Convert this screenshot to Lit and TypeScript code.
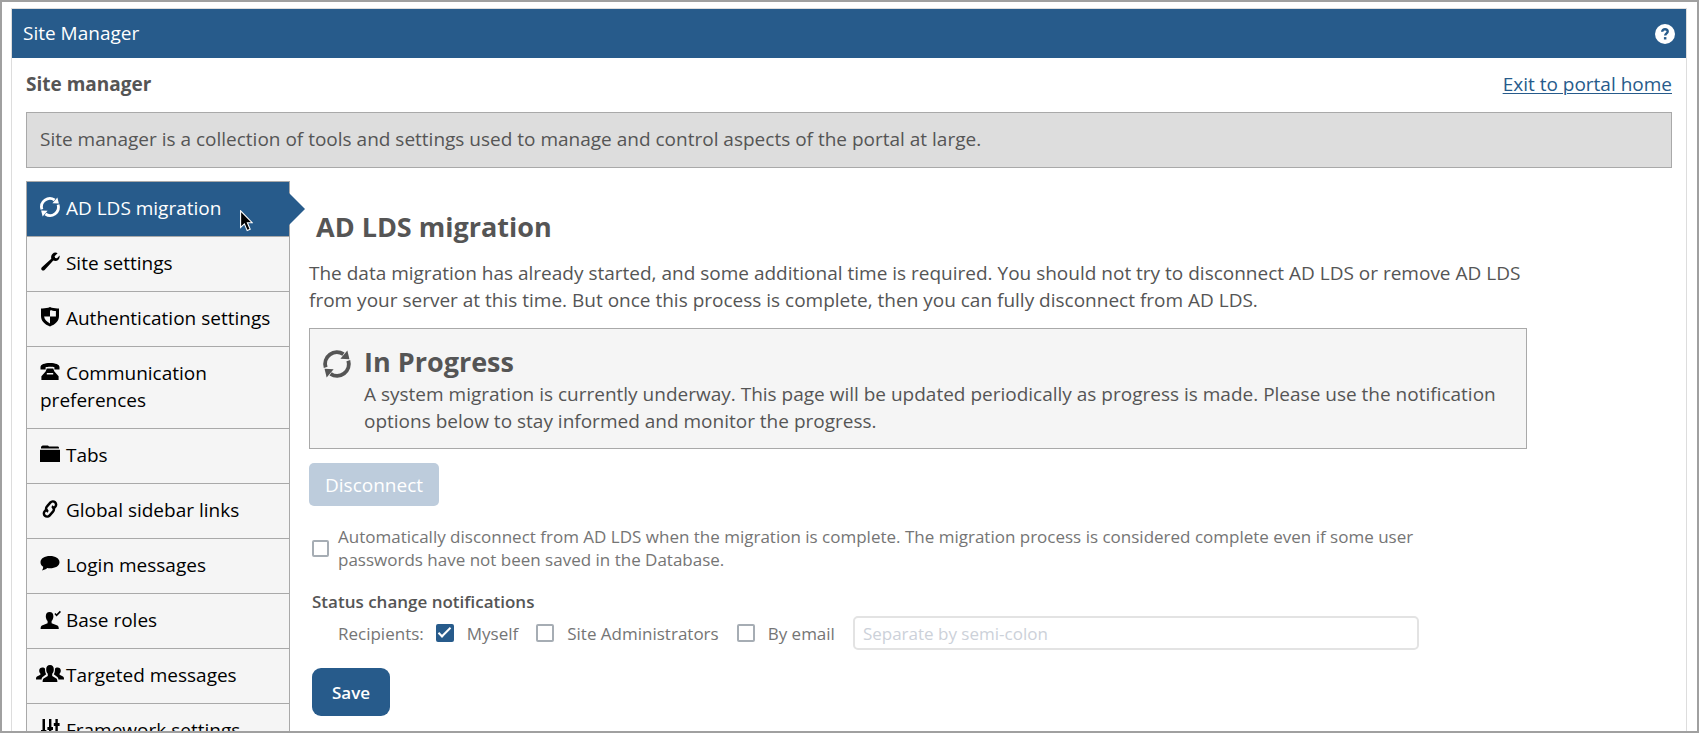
import { LitElement, html, css, svg, SVGTemplateResult } from "lit";
import { customElement, property, state } from "lit/decorators.js";
import { classMap } from "lit/directives/class-map.js";

type IconName =
  | "refresh" | "wrench" | "shield" | "phone" | "folder" | "link"
  | "comment" | "role" | "group" | "sliders" | "help";

// Every glyph is drawn on a 20 x 20 grid; "group" spills over its sides.
const ICONS: Record<IconName, SVGTemplateResult> = {
  refresh: svg`
    <path d="M1.9 12.4A8.4 8.4 0 0 1 14.6 3" fill="none" stroke="currentColor" stroke-width="2.8"/>
    <path d="M18.1 7.6A8.4 8.4 0 0 1 5.4 17" fill="none" stroke="currentColor" stroke-width="2.8"/>
    <path d="M17.4 0.4L18.9 6.6L12.4 6.2Z"/>
    <path d="M2.6 19.6L1.1 13.4L7.6 13.8Z"/>`,
  wrench: svg`
    <path d="M17.6 1.2L14.6 4.2L15.2 5.9L17 6.3L19.6 3.6C20.1 6.6 18 9 15.3 9C14.6 9 13.9 8.8 13.3 8.6L4.6 17.9C3.8 18.8 2.6 18.8 1.8 18.1C1 17.3 1 16.1 1.9 15.3L11.3 6.8C10.6 4.2 11.9 0.9 15.4 0.6C16.2 0.6 17 0.8 17.6 1.2Z"/>`,
  shield: svg`
    <path fill-rule="evenodd" d="M10 0C12.6 1.2 15.8 1.6 19 1.4V9C19 14 15.4 17.4 10 19.4C4.6 17.4 1 14 1 9V1.4C4.2 1.6 7.4 1.2 10 0ZM10 3.2V9.6H4.1C4.5 12.9 6.8 15 10 16.4V9.6H15.9V4C13.6 4 11.8 3.8 10 3.2Z"/>`,
  phone: svg`
    <path d="M0.5 7.4V5C0.5 2.6 4.4 1 10 1S19.5 2.6 19.5 5V7.4H14.4V5.2C12.4 4.5 7.6 4.5 5.6 5.2V7.4Z"/>
    <path fill-rule="evenodd" d="M6.8 6.4H13.2L14.4 9.4L18.6 14.2V18H1.4V14.2L5.6 9.4ZM6.8 11V12.6H13.2V11Z"/>`,
  folder: svg`
    <path d="M1 4.6V2.8L2.6 1.6H8L9 2.6H18.2L19 3.6V4.6Z"/>
    <path d="M0 5.8H20V18H0Z"/>`,
  link: svg`
    <g fill="none" stroke="currentColor" stroke-width="2.5" transform="rotate(-48 10 10)">
      <path d="M12 12.4H15.2A3.2 3.2 0 0 0 18.4 9.2A3.2 3.2 0 0 0 15.2 6H10A3.2 3.2 0 0 0 6.9 10.4"/>
      <path d="M8 7.6H4.8A3.2 3.2 0 0 0 1.6 10.8A3.2 3.2 0 0 0 4.8 14H10A3.2 3.2 0 0 0 13.1 9.6"/>
    </g>`,
  comment: svg`
    <path d="M10 2C15.4 2 19.5 4.4 19.5 8.2S15.4 14.2 10 14.2C9 14.2 8.1 14.1 7.2 14C5.8 15.3 4.1 16.2 2 16.4C2.8 15.3 3.2 14.2 3.2 12.8C1.6 11.7 0.5 10.2 0.5 8.2C0.5 4.4 4.6 2 10 2Z"/>`,
  role: svg`
    <path d="M9.6 3C12 3 13.4 4.6 13.4 7.2C13.4 9.4 12.6 11 11.6 12V14.2L17.4 16.6C18.4 17.2 18.8 18.4 18.8 20H0.6C0.6 18.4 1 17.2 2 16.6L7.6 14.2V12C6.6 11 5.8 9.4 5.8 7.2C5.8 4.6 7.2 3 9.6 3Z"/>
    <path d="M15 4.4L16.6 6.4L20.4 2.4" fill="none" stroke="currentColor" stroke-width="1.6"/>`,
  group: svg`
    <path d="M10 1C12.6 1 13.8 2.8 13.8 5.2C13.8 7.4 13.2 8.8 12.2 9.8V12L16.4 14.4C17.2 15 17.4 16.4 17.4 18H2.6C2.6 16.4 2.8 15 3.6 14.4L7.8 12V9.8C6.8 8.8 6.2 7.4 6.2 5.2C6.2 2.8 7.4 1 10 1Z"/>
    <path d="M2.4 3.4C3.6 3.4 4.6 3.8 5 4.6C5 7.6 5.4 9 6.2 10.2L3 12.8C2 13.4 1.6 14.4 1.6 15.4H-4C-4 13.8 -3.8 13 -3 12.6L0.4 10.8V9.4C-0.4 8.6 -0.8 7.8 -0.8 6.4C-0.8 4.6 0.6 3.4 2.4 3.4Z"/>
    <path d="M17.6 3.4C16.4 3.4 15.4 3.8 15 4.6C15 7.6 14.6 9 13.8 10.2L17 12.8C18 13.4 18.4 14.4 18.4 15.4H24C24 13.8 23.8 13 23 12.6L19.6 10.8V9.4C20.4 8.6 20.8 7.8 20.8 6.4C20.8 4.6 19.4 3.4 17.6 3.4Z"/>`,
  sliders: svg`
    <path d="M2.5 0H5V20H2.5ZM9 0H11.4V20H9ZM15.4 0H17.8V20H15.4Z"/>
    <path d="M1 11H6.4V14H1ZM7.4 8H13V11H7.4ZM13.8 4H19.6V7H13.8Z"/>`,
  help: svg`
    <circle cx="10" cy="10" r="10"/>
    <path d="M7.2 7.8C7.2 6 8.4 5.2 10 5.2S12.7 6.1 12.7 7.5C12.7 9.4 10.2 9.3 10.2 11.6" fill="none" stroke="#275b8b" stroke-width="2.4"/>
    <path d="M8.9 13.1H11.4V15.5H8.9Z" fill="#275b8b"/>`,
};

@customElement("ui-icon")
class UiIcon extends LitElement {
  @property() name: IconName = "refresh";

  static styles = css`
    :host { display: inline-block; width: 20px; height: 20px; flex: none; }
    .glyph { display: block; width: 100%; height: 100%; overflow: visible; fill: currentColor; }
  `;

  render() {
    return html`<svg class="glyph" viewBox="0 0 20 20" aria-hidden="true">${ICONS[this.name]}</svg>`;
  }
}

@customElement("site-menu")
class SiteMenu extends LitElement {
  @state() active = 0;

  items: { icon: IconName; label: string }[] = [
    { icon: "refresh", label: "AD LDS migration" },
    { icon: "wrench", label: "Site settings" },
    { icon: "shield", label: "Authentication settings" },
    { icon: "phone", label: "Communication preferences" },
    { icon: "folder", label: "Tabs" },
    { icon: "link", label: "Global sidebar links" },
    { icon: "comment", label: "Login messages" },
    { icon: "role", label: "Base roles" },
    { icon: "group", label: "Targeted messages" },
    { icon: "sliders", label: "Framework settings" },
  ];

  static styles = css`
    :host { display: block; }
    .list { list-style: none; margin: 0; padding: 0; border: 1px solid #a9a9a9; border-bottom: 0; }
    .row { position: relative; border-bottom: 1px solid #a9a9a9; }
    .item {
      display: block; padding: 13px 13px 14px; line-height: 27px;
      background: #f5f5f5; color: #000; text-decoration: none;
    }
    .item ui-icon { vertical-align: -2px; margin-right: 1px; }
    .current .item { background: #275b8b; color: #fff; }
    .current::after {
      content: ""; position: absolute; left: 100%; top: 50%; margin-top: -16px;
      border: solid transparent; border-width: 16px 0 16px 16px; border-left-color: #275b8b;
    }
    .pointer { position: absolute; right: 36px; top: 28px; width: 13px; height: 22px; z-index: 1; }
  `;

  render() {
    return html`<ul class="list">
      ${this.items.map((item, i) => html`
        <li class=${classMap({ row: true, current: i === this.active })}>
          <a class="item" href="#" @click=${(e: Event) => { e.preventDefault(); this.active = i; }}
            ><ui-icon name=${item.icon}></ui-icon> ${item.label}</a>
          ${i === 0 ? html`<svg class="pointer" viewBox="0 0 13 22" aria-hidden="true">
            <path d="M0.6 0.8V17.4L4.4 13.9L7.2 20.6L10.2 19.3L7.4 12.8H12.4Z" fill="#000" stroke="#fff" stroke-width="1.1"/>
          </svg>` : null}
        </li>`)}
    </ul>`;
  }
}

@customElement("migration-panel")
class MigrationPanel extends LitElement {
  static styles = css`
    :host { display: block; }
    .title { margin: 0; padding-left: 7px; font-size: 27px; line-height: 36px; font-weight: 700; }
    .intro { margin: 15px 0 14px; }
    .status {
      display: flex; gap: 13px; box-sizing: border-box; padding: 14px 13px 13px;
      border: 1px solid #a9a9a9; background: #f5f5f5;
    }
    .status ui-icon { width: 28px; height: 28px; margin-top: 7px; }
    .status-title { margin: 0; font-size: 27px; line-height: 38px; font-weight: 700; }
    .status-text { margin: 0; }
    .btn { border: 0; font-family: inherit; color: #fff; }
    .disconnect {
      margin-top: 14px; height: 43px; padding: 0 16px; border-radius: 5px;
      background: #bdccdc; font-size: 19px;
    }
    .form { margin: 19px 0 0 3px; font-size: 17px; line-height: 23px; color: #757575; }
    .auto { display: flex; align-items: center; gap: 9px; }
    .auto-label { max-width: 1080px; }
    .check {
      appearance: none; flex: none; width: 18px; height: 18px; margin: 0; display: grid;
      place-items: center; border: 2px solid #a6adb4; border-radius: 2px; background: #fff;
    }
    .check.small { width: 17px; height: 17px; }
    .check:checked { border-color: #275b8b; background: #275b8b; }
    .check:checked::before {
      content: ""; width: 13px; height: 6px; margin-bottom: 4px; transform: rotate(-45deg);
      box-sizing: border-box; border: solid #fff; border-width: 0 0 2px 2px;
    }
    .legend { margin: 19px 0 3px; font-size: 17px; font-weight: 600; line-height: 23px; color: #555; }
    .recipients { display: flex; align-items: center; padding-left: 26px; }
    .recipients-name { margin-right: 12px; }
    .choice { display: flex; align-items: center; gap: 13px; margin-right: 18px; }
    .email {
      flex: 0 1 566px; min-width: 0; height: 34px; box-sizing: border-box;
      padding: 0 8px; border: 2px solid #e3e3e3; border-radius: 5px; background: #fff;
      font: inherit; color: #555;
    }
    .email::placeholder { color: #ccd1d9; opacity: 1; }
    .save {
      margin-top: 18px; height: 48px; padding: 0 20px; border-radius: 9px; background: #275b8b;
      font-size: 17px; font-weight: 600;
    }
  `;

  render() {
    return html`
      <h1 class="title">AD LDS migration</h1>
      <p class="intro">The data migration has already started, and some additional time is required. You should not try to disconnect AD LDS or remove AD LDS from your server at this time. But once this process is complete, then you can fully disconnect from AD LDS.</p>
      <section class="status">
        <ui-icon name="refresh"></ui-icon>
        <div>
          <h2 class="status-title">In Progress</h2>
          <p class="status-text">A system migration is currently underway. This page will be updated periodically as progress is made. Please use the notification options below to stay informed and monitor the progress.</p>
        </div>
      </section>
      <button class="btn disconnect" type="button" disabled>Disconnect</button>
      <form class="form" @submit=${(e: Event) => e.preventDefault()}>
        <div class="auto">
          <input class="check small" type="checkbox" id="auto">
          <label class="auto-label" for="auto">Automatically disconnect from AD LDS when the migration is complete. The migration process is considered complete even if some user passwords have not been saved in the Database.</label>
        </div>
        <h3 class="legend" id="notify">Status change notifications</h3>
        <div class="recipients" role="group" aria-labelledby="notify">
          <span class="recipients-name">Recipients:</span>
          <label class="choice"><input class="check" type="checkbox" checked>Myself</label>
          <label class="choice"><input class="check" type="checkbox">Site Administrators</label>
          <label class="choice"><input class="check" type="checkbox">By email</label>
          <input class="email" type="text" aria-label="Email recipients" placeholder="Separate by semi-colon">
        </div>
        <button class="btn save" type="submit">Save</button>
      </form>`;
  }
}

@customElement("app-root")
class AppRoot extends LitElement {
  static styles = css`
    :host {
      display: block; box-sizing: border-box; height: 100vh; overflow: hidden;
      padding: 6px 10px 0 9px; border: 2px solid #a0a0a0; background: #fff; color: #555;
      font-family: "Open Sans", sans-serif; font-size: 19px; line-height: 27px;
    }
    .window { border: 1px solid #ddd; }
    .bar {
      display: flex; align-items: center; justify-content: space-between;
      padding: 11px; background: #275b8b; color: #fff;
    }
    .help { display: flex; padding: 0; border: 0; background: none; color: #fff; }
    .body { padding: 13px 14px; }
    .top { display: flex; justify-content: space-between; }
    .name { font-weight: 700; }
    .exit { color: #275b8b; text-underline-offset: 2px; text-decoration-thickness: 1px; }
    .about {
      margin: 14px 0 13px; padding: 13px 13px 14px; border: 1px solid #a9a9a9; background: #ddd;
    }
    .columns { display: flex; align-items: flex-start; gap: 19px; }
    .menu { flex: none; width: 264px; }
    .panel { flex: 1; max-width: 1218px; padding-top: 28px; }
  `;

  render() {
    return html`
      <div class="window">
        <header class="bar">
          <span>Site Manager</span>
          <button class="help" type="button" aria-label="Help"><ui-icon name="help"></ui-icon></button>
        </header>
        <main class="body">
          <div class="top">
            <strong class="name">Site manager</strong>
            <a class="exit" href="#">Exit to portal home</a>
          </div>
          <div class="about">Site manager is a collection of tools and settings used to manage and control aspects of the portal at large.</div>
          <div class="columns">
            <site-menu class="menu"></site-menu>
            <migration-panel class="panel"></migration-panel>
          </div>
        </main>
      </div>`;
  }
}
